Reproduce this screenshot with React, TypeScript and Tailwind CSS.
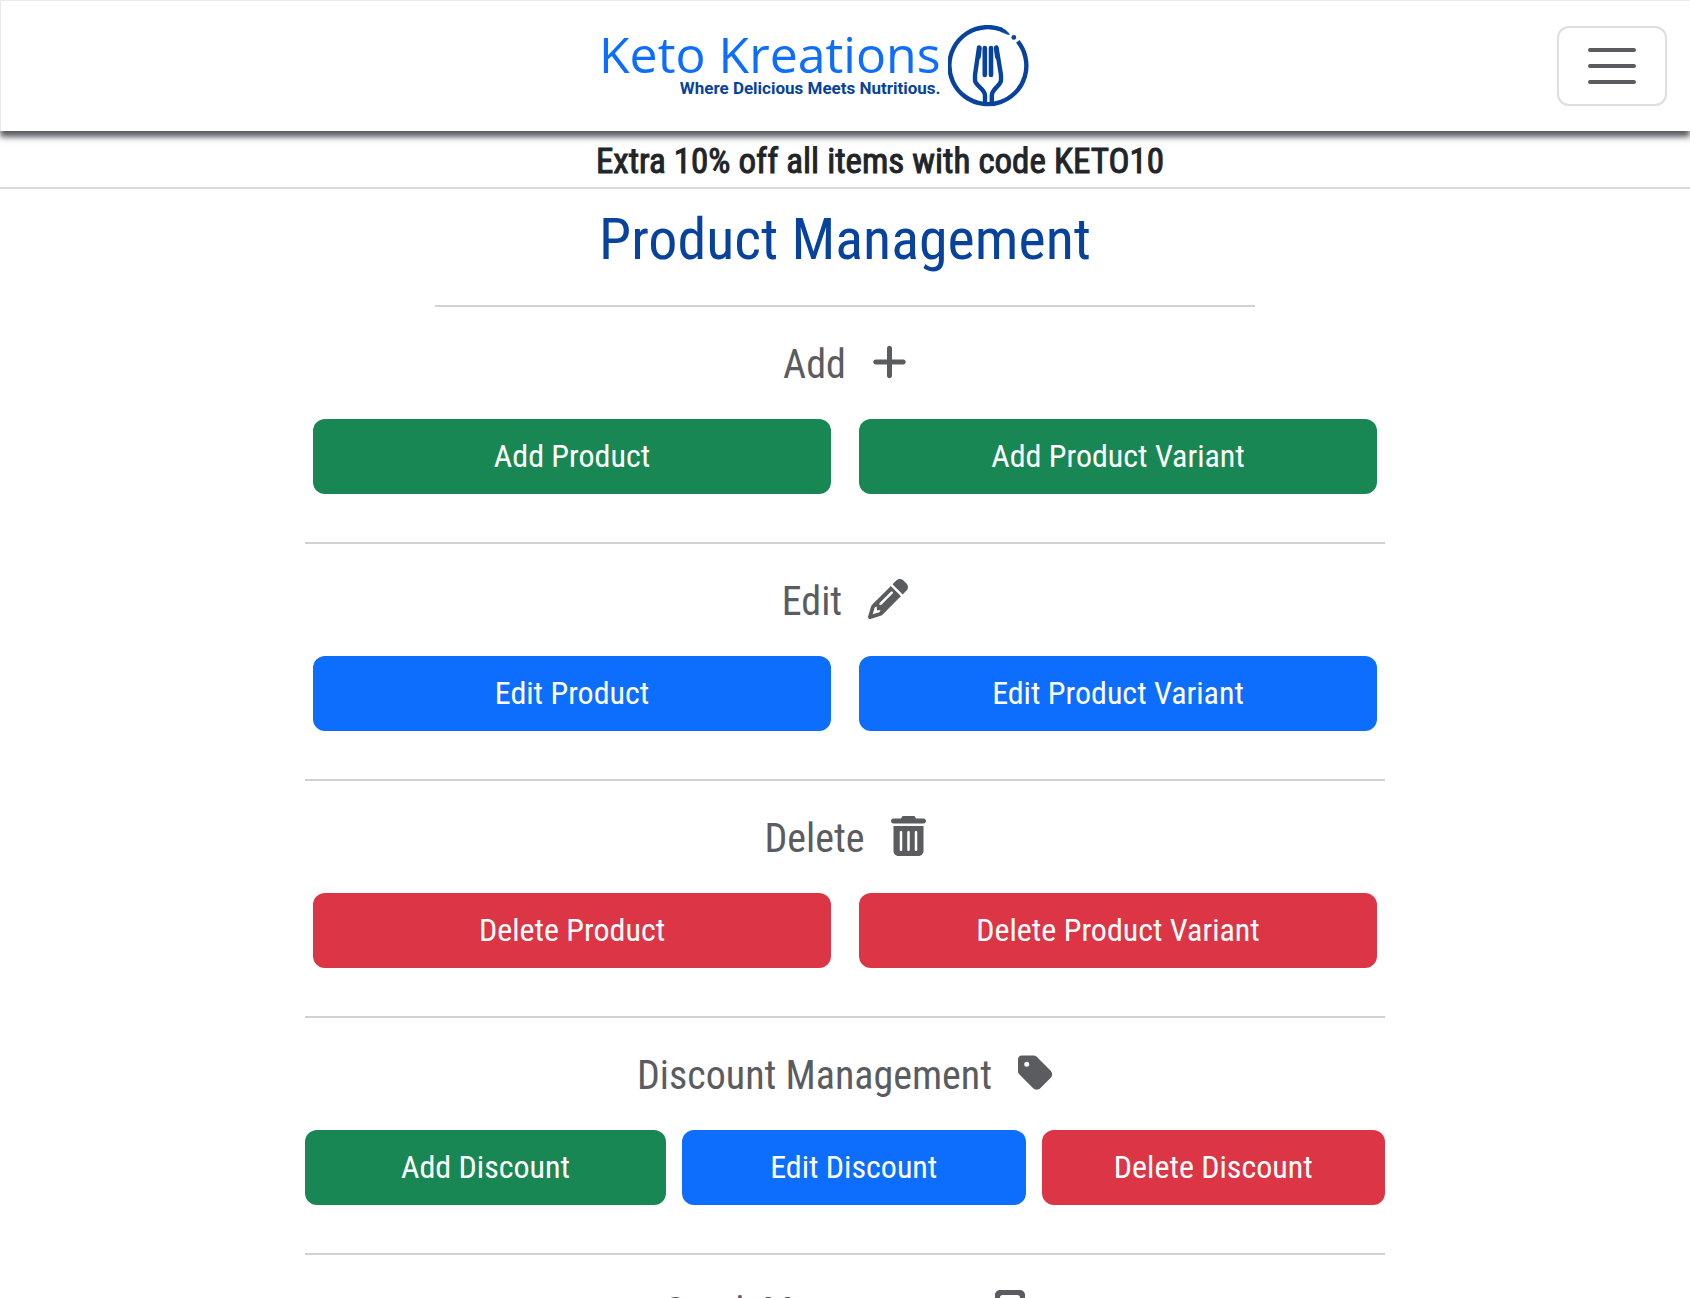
import React from "react";
import { FaPlus, FaPencil, FaTrashCan, FaTag, FaCalculator } from "react-icons/fa6";

const GREEN = "bg-[#198754] hover:bg-[#157347]";
const BLUE = "bg-[#0d6efd] hover:bg-[#0b5ed7]";
const RED = "bg-[#dc3545] hover:bg-[#bb2d3b]";

function ActionButton({ color, grow = "flex-1", children }: { color: string; grow?: string; children: React.ReactNode }) {
  return (
    <button type="button" className={`${color} ${grow} h-[75px] rounded-xl pb-0.5 text-[32px] leading-[48px] text-white`}>
      {children}
    </button>
  );
}

function SectionHeading({ label, icon }: { label: string; icon: React.ReactNode }) {
  return (
    <h2 className="mb-[30px] flex h-[50px] items-end justify-center gap-[26px] text-[40px] leading-[48px] text-[#5a5c5f]">
      <span>{label}</span>
      <span className="flex h-[50px] items-center pb-1">{icon}</span>
    </h2>
  );
}

function Rule() {
  return <hr className="mt-12 mb-8 border-t-2 border-[#d0d1d2]" />;
}

function PlateFork() {
  return (
    <svg viewBox="0 0 82 82" className="ml-[7px] size-[82px]" fill="none" stroke="#07439c" strokeLinecap="round" strokeLinejoin="round" aria-hidden="true">
      <path d="M69.8 16.4A38.5 38.5 0 1 1 54 4.8" strokeWidth="4.4" strokeLinecap="butt" />
      <path d="M53.2 2.8Q58 4.5 61.5 9L60.8 9.8Q57 8.3 53 6.8Z" fill="#07439c" strokeWidth="0.6" />
      <circle cx="65.8" cy="12.4" r="2.4" fill="#07439c" stroke="none" />
      <path d="M31 22.5L27 50V55C27 61 37 63.5 37 70.5V77" strokeWidth="4.4" />
      <path d="M48.5 22.5L53 50V55C53 61 43.8 63.5 43.8 70.5V77" strokeWidth="4.4" />
      <path d="M36.8 23V50M43 23V50" strokeWidth="4.6" />
      <path d="M31.6 23L30.6 32M48 23L49.2 32" strokeWidth="4.4" />
    </svg>
  );
}

export default function App() {
  return (
    <div className="h-screen overflow-hidden bg-white font-['Roboto_Condensed','Liberation_Sans_Narrow',Roboto,sans-serif] text-[#212529]">
      <header className="relative flex h-[131px] items-center border-t border-l border-[#e9eaea] pr-[23px] shadow-[0_6px_6px_0_#5a5c5f]">
        <a href="#home" className="ml-[598px] flex items-center">
          <span className="flex flex-col items-end pb-2">
            <span className="font-['Open_Sans',sans-serif] text-[50px] leading-[52px] text-[#0d6efd]">Keto Kreations</span>
            <span className="font-[Roboto,sans-serif] text-[17px] leading-4 font-bold text-[#07439c]">Where Delicious Meets Nutritious.</span>
          </span>
          <PlateFork />
        </a>
        <button type="button" aria-label="Toggle navigation" className="ml-auto flex h-20 w-[110px] items-center justify-center rounded-xl border-2 border-[#dedede]">
          <svg viewBox="0 0 30 30" className="size-[60px]" stroke="#5a5c5f" strokeLinecap="round" strokeMiterlimit="10" strokeWidth="2" aria-hidden="true">
            <path d="M4 7h22M4 15h22M4 23h22" />
          </svg>
        </button>
      </header>

      <div className="border-b-2 border-[#d9dada] pt-2 pb-0.5 pl-[70px] text-center text-[35px] leading-[46px] [-webkit-text-stroke:1px_#212529]">
        Extra 10% off all items with code KETO10
      </div>

      <main className="mx-auto w-[1080px] max-w-full">
        <h1 className="pt-4 text-center text-[58px] leading-[68px] text-[#07439c]">Product Management</h1>
        <hr className="mx-auto mt-8 mb-8 w-[76%] border-t-2 border-[#d0d1d2]" />

        <section>
          <SectionHeading label="Add" icon={<FaPlus className="h-10 w-[35px]" />} />
          <div className="flex gap-7 px-2">
            <ActionButton color={GREEN}>Add Product</ActionButton>
            <ActionButton color={GREEN}>Add Product Variant</ActionButton>
          </div>
        </section>
        <Rule />
        <section>
          <SectionHeading label="Edit" icon={<FaPencil className="size-10" />} />
          <div className="flex gap-7 px-2">
            <ActionButton color={BLUE}>Edit Product</ActionButton>
            <ActionButton color={BLUE}>Edit Product Variant</ActionButton>
          </div>
        </section>
        <Rule />
        <section>
          <SectionHeading label="Delete" icon={<FaTrashCan className="h-10 w-[35px]" />} />
          <div className="flex gap-7 px-2">
            <ActionButton color={RED}>Delete Product</ActionButton>
            <ActionButton color={RED}>Delete Product Variant</ActionButton>
          </div>
        </section>
        <Rule />
        <section>
          <SectionHeading label="Discount Management" icon={<FaTag className="h-10 w-[35px]" />} />
          <div className="flex gap-4">
            <ActionButton color={GREEN} grow="w-[361px]">Add Discount</ActionButton>
            <ActionButton color={BLUE}>Edit Discount</ActionButton>
            <ActionButton color={RED}>Delete Discount</ActionButton>
          </div>
        </section>
        <Rule />
        <section>
          <SectionHeading label="Stock Management" icon={<FaCalculator className="h-10 w-[30px]" />} />
        </section>
      </main>
    </div>
  );
}
